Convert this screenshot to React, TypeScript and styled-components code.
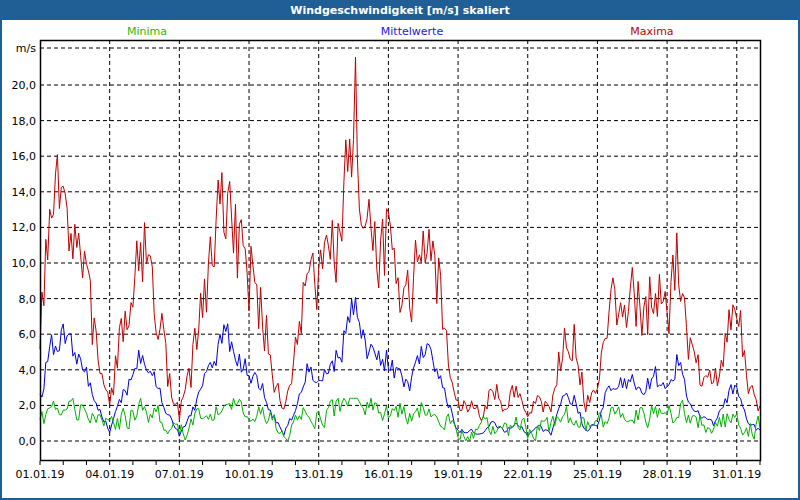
import React, { useMemo } from "react";
import styled, { createGlobalStyle } from "styled-components";

const Global = createGlobalStyle`
  html, body { margin: 0; padding: 0; background: #fff; }
`;

const Window = styled.div`
  width: 800px;
  height: 500px;
  box-sizing: border-box;
  border: 2px solid #1f5f96;
  border-top: none;
  display: flex;
  flex-direction: column;
  font-family: "DejaVu Sans", "Liberation Sans", sans-serif;
  background: #fff;
`;

const TitleBar = styled.div`
  height: 20px;
  flex: none;
  margin: 0 -2px;
  background: #1f5f96;
  color: #fff;
  font-weight: bold;
  font-size: 11px;
  display: flex;
  align-items: center;
  justify-content: center;
`;

const Chart = styled.svg`
  display: block;
  width: 796px;
  height: 478px;
  font-family: "DejaVu Sans", "Liberation Sans", sans-serif;
  font-size: 11px;
`;

const X0 = 40;
const X1 = 760;
const DAY = (X1 - X0) / 31;
const Y0 = 441;
const STEP = (441 - 85) / 10;
const yOf = (v: number) => Y0 - (v / 2) * STEP;

const env: [number, number][] = [
  [0, 6], [0.5, 13], [1, 14], [1.5, 12], [2, 9], [2.5, 5], [3, 2], [3.5, 6], [4, 9], [4.3, 12],
  [5, 8], [5.5, 4], [6, 1.5], [6.5, 4], [7, 8], [7.5, 11], [8, 15], [8.5, 11], [9, 9.5], [9.5, 8],
  [10, 4], [10.5, 1.5], [11, 5], [11.5, 10], [12, 9], [12.5, 10], [13, 12], [13.5, 19], [14, 13],
  [14.5, 11], [15, 11], [15.5, 9], [16, 8], [16.5, 13], [17, 10], [17.5, 6], [18, 2], [18.5, 2],
  [19, 1.5], [19.5, 3], [20, 2], [20.5, 3], [21, 1.5], [21.5, 2.5], [22, 1.5], [22.5, 6], [23, 6],
  [23.5, 2], [24, 3], [24.5, 8], [25, 8], [25.5, 9], [26, 7], [26.5, 9], [27, 7], [27.5, 11],
  [28, 5], [28.5, 4], [29, 3], [29.5, 6], [30, 8], [30.5, 3], [31, 2],
];

function interp(d: number) {
  for (let i = 0; i < env.length - 1; i++) {
    const [a, va] = env[i];
    const [b, vb] = env[i + 1];
    if (d >= a && d <= b) return va + ((vb - va) * (d - a)) / (b - a);
  }
  return 2;
}

function rng(seed: number) {
  return () => {
    seed = (seed * 1664525 + 1013904223) % 4294967296;
    return seed / 4294967296;
  };
}

function buildSeries() {
  const r = rng(7);
  const n = 31 * 12;
  const max: string[] = [], mean: string[] = [], min: string[] = [];
  let mn = 0.8;
  for (let i = 0; i <= n; i++) {
    const d = i / 12;
    const e = interp(d);
    const vMax = Math.max(1, e * (0.75 + r() * 0.45));
    const vMean = Math.max(0, e * (0.38 + r() * 0.12) - 0.3);
    mn = mn * 0.45 + (0.5 + vMean * 0.3 + (r() - 0.5) * 2.2) * 0.55;
    mn = Math.max(0, Math.min(2.4, mn));
    const x = (X0 + d * DAY).toFixed(1);
    max.push(`${x},${yOf(vMax).toFixed(1)}`);
    mean.push(`${x},${yOf(vMean).toFixed(1)}`);
    min.push(`${x},${yOf(mn).toFixed(1)}`);
  }
  return { max: max.join(" "), mean: mean.join(" "), min: min.join(" ") };
}

const dash = "4 3";

export default function App() {
  const s = useMemo(buildSeries, []);
  const yVals = [0, 2, 4, 6, 8, 10, 12, 14, 16, 18, 20];
  const labels = [1, 4, 7, 10, 13, 16, 19, 22, 25, 28, 31];
  return (
    <>
      <Global />
      <Window>
        <TitleBar>Windgeschwindigkeit [m/s] skaliert</TitleBar>
        <Chart viewBox="2 20 796 478">
          <text x={147} y={35} fill="#22c000" textAnchor="middle">Minima</text>
          <text x={412} y={35} fill="#2020e0" textAnchor="middle">Mittelwerte</text>
          <text x={652} y={35} fill="#c00000" textAnchor="middle">Maxima</text>
          <text x={36} y={52} textAnchor="end" fill="#000">m/s</text>
          {yVals.map((v) => (
            <g key={v}>
              <line x1={X0} x2={X1} y1={yOf(v)} y2={yOf(v)} stroke="#000" strokeDasharray={dash} />
              <text x={36} y={yOf(v) + 4} textAnchor="end" fill="#000">
                {v.toFixed(1).replace(".", ",")}
              </text>
            </g>
          ))}
          <line x1={X0} x2={X1} y1={48} y2={48} stroke="#000" strokeDasharray={dash} />
          {labels.map((d) => {
            const x = X0 + (d - 1) * DAY;
            return (
              <g key={d}>
                {d > 1 && <line x1={x} x2={x} y1={40} y2={461} stroke="#000" strokeDasharray={dash} />}
                <text x={x} y={478} textAnchor="middle" fill="#000">
                  {String(d).padStart(2, "0")}.01.19
                </text>
              </g>
            );
          })}
          {Array.from({ length: 32 }, (_, i) => (
            <line key={i} x1={X0 + i * DAY} x2={X0 + i * DAY} y1={461} y2={465} stroke="#000" />
          ))}
          <polyline points={s.max} fill="none" stroke="#c00000" strokeWidth={1} />
          <polyline points={s.mean} fill="none" stroke="#0000e0" strokeWidth={1} />
          <polyline points={s.min} fill="none" stroke="#00b000" strokeWidth={1} />
          <rect x={X0 + 0.5} y={40.5} width={X1 - X0} height={420} fill="none" stroke="#000" strokeWidth={1.5} />
        </Chart>
      </Window>
    </>
  );
}
